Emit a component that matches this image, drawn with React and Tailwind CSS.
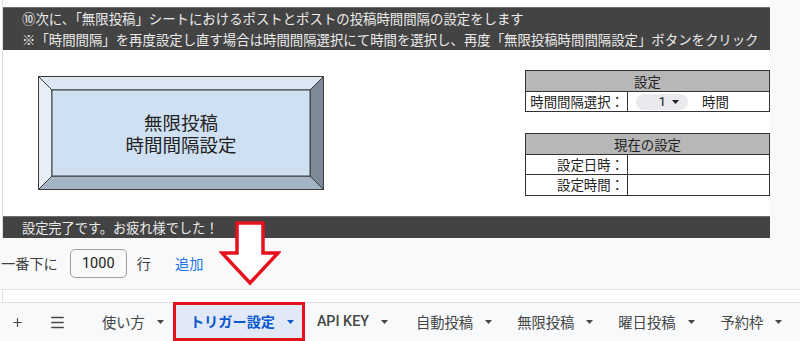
import React from 'react'
import { Plus, Menu } from 'lucide-react'

function Caret({ className = 'fill-[#444746]' }) {
  return (
    <svg width="7" height="4" viewBox="0 0 7 4" className={className}>
      <path d="M0 0h7L3.5 4z" />
    </svg>
  )
}

function Tab({ label, ml, latin }) {
  return (
    <div className={`flex items-center gap-[12px] ${ml}`}>
      <span className={`text-[14.3px] text-[#444746] ${latin ? "font-['Roboto',sans-serif] font-medium" : ''}`}>{label}</span>
      <Caret />
    </div>
  )
}

function BevelButton() {
  return (
    <div className="relative w-[286px] h-[114px] ml-[35px] mt-[26px]">
      <svg width="286" height="114" viewBox="0 0 286 114" className="absolute inset-0">
        <g stroke="#3a3a3a" strokeWidth="1" strokeLinejoin="round">
          <polygon points="0.5,0.5 285.5,0.5 272,14 14,14" fill="#dde7f3" />
          <polygon points="0.5,0.5 14,14 14,100 0.5,113.5" fill="#e6eef8" />
          <polygon points="0.5,113.5 14,100 272,100 285.5,113.5" fill="#a5b4c4" />
          <polygon points="285.5,0.5 285.5,113.5 272,100 272,14" fill="#7c8997" />
          <rect x="14" y="14" width="258" height="86" fill="#cfe0f2" />
        </g>
      </svg>
      <div className="absolute inset-0 flex flex-col items-center justify-center text-[18.5px] leading-[22px] text-[#222]">
        <span>無限投稿</span>
        <span>時間間隔設定</span>
      </div>
    </div>
  )
}

function Tables() {
  return (
    <div className="ml-auto w-[245px] mt-[20px] text-[13.4px] text-[#222]">
      <div className="border border-[#333]">
        <div className="h-[21px] bg-[#b7b7b7] border-b border-[#333] text-center leading-[20px]">設定</div>
        <div className="flex h-[19px]">
          <div className="w-[102px] border-r border-[#333] text-right pr-[3px] leading-[19px]">時間間隔選択：</div>
          <div className="flex items-center pl-[8px]">
            <div className="flex items-center justify-end gap-[6px] w-[52px] h-[16px] rounded-full bg-[#e8eaed] pr-[9px] font-['Roboto',sans-serif] text-[13.5px]">
              <span>1</span>
              <Caret className="fill-[#222]" />
            </div>
            <span className="ml-[14px]">時間</span>
          </div>
        </div>
      </div>
      <div className="border border-[#333] mt-[21px]">
        <div className="h-[21px] bg-[#b7b7b7] border-b border-[#333] text-center leading-[20px]">現在の設定</div>
        <div className="flex h-[20px] border-b border-[#333]">
          <div className="w-[102px] border-r border-[#333] text-right pr-[3px] leading-[19px]">設定日時：</div>
        </div>
        <div className="flex h-[20px]">
          <div className="w-[102px] border-r border-[#333] text-right pr-[3px] leading-[19px]">設定時間：</div>
        </div>
      </div>
    </div>
  )
}

export default function App() {
  return (
    <div className="relative w-[800px] h-[341px] overflow-hidden bg-white font-['Noto_Sans_CJK_JP',sans-serif] text-[#222]">
      {/* sheet */}
      <div className="flex h-[238px]">
        <div className="w-[768px] ml-[2px] border-l border-[#dadce0] pt-[7px] flex flex-col">
          <div className="h-[43px] bg-[#434343] border-t border-[#6f6f6f] text-[#ececec] text-[13.4px] leading-[21px] pl-[19px]">
            <p>⑩次に、「無限投稿」シートにおけるポストとポストの投稿時間間隔の設定をします</p>
            <p>※「時間間隔」を再度設定し直す場合は時間間隔選択にて時間を選択し、再度「無限投稿時間間隔設定」ボタンをクリック</p>
          </div>
          <div className="flex flex-1">
            <BevelButton />
            <Tables />
          </div>
          <div className="h-[22px] bg-[#434343] border-t border-[#6f6f6f] text-[#ececec] text-[13.2px] leading-[21px] pl-[19px]">
            設定完了です。お疲れ様でした！
          </div>
        </div>
        <div className="flex-1 bg-[#f8f9fa]" />
      </div>

      {/* add rows */}
      <div className="h-[52px] bg-[#f8f9f8] border-b border-[#e3e3e3] flex items-center text-[14.2px] text-[#3c4043]">
        <span className="ml-[1px]">一番下に</span>
        <div className="ml-[12px] w-[57px] h-[29px] border border-[#9aa0a6] rounded-[5px] flex items-center justify-center font-['Roboto',sans-serif] text-[14.5px] text-[#222]">
          1000
        </div>
        <span className="ml-[10px]">行</span>
        <span className="ml-[24px] text-[#1a73e8]">追加</span>
      </div>
      <div className="h-[12px] ml-[2px] border-l border-[#dadce0]" />

      {/* sheet tabs */}
      <div className="h-[39px] bg-[#f8f9fa] border-t border-[#e0e0e0] flex items-center">
        <div className="w-[35px] flex justify-center">
          <Plus className="w-[13px] h-[13px] text-[#444746]" strokeWidth={2.2} />
        </div>
        <div className="w-[44px] flex justify-center">
          <Menu className="w-[17px] h-[17px] text-[#444746]" strokeWidth={2} />
        </div>
        <Tab label="使い方" ml="ml-[23px]" />
        <div className="ml-[9px] w-[132px] h-[39px] self-start -mt-[1px] border-[3px] border-[#e5121d] bg-[#e1e9f7] flex items-center gap-[12px] pl-[14px]">
          <span className="text-[14.2px] font-bold text-[#0b57d0]">トリガー設定</span>
          <Caret className="fill-[#0b57d0]" />
        </div>
        <Tab label="API KEY" ml="ml-[12px]" latin />
        <Tab label="自動投稿" ml="ml-[28px]" />
        <Tab label="無限投稿" ml="ml-[25px]" />
        <Tab label="曜日投稿" ml="ml-[25px]" />
        <Tab label="予約枠" ml="ml-[26px]" />
      </div>

      {/* red arrow */}
      <svg width="62" height="66" viewBox="0 0 62 66" className="absolute left-[219px] top-[221px]">
        <polygon
          points="18,2 44,2 44,32 59,32 31,62 3,32 18,32"
          fill="#fff"
          stroke="#e5121d"
          strokeWidth="3.5"
          strokeLinejoin="miter"
        />
      </svg>
    </div>
  )
}
